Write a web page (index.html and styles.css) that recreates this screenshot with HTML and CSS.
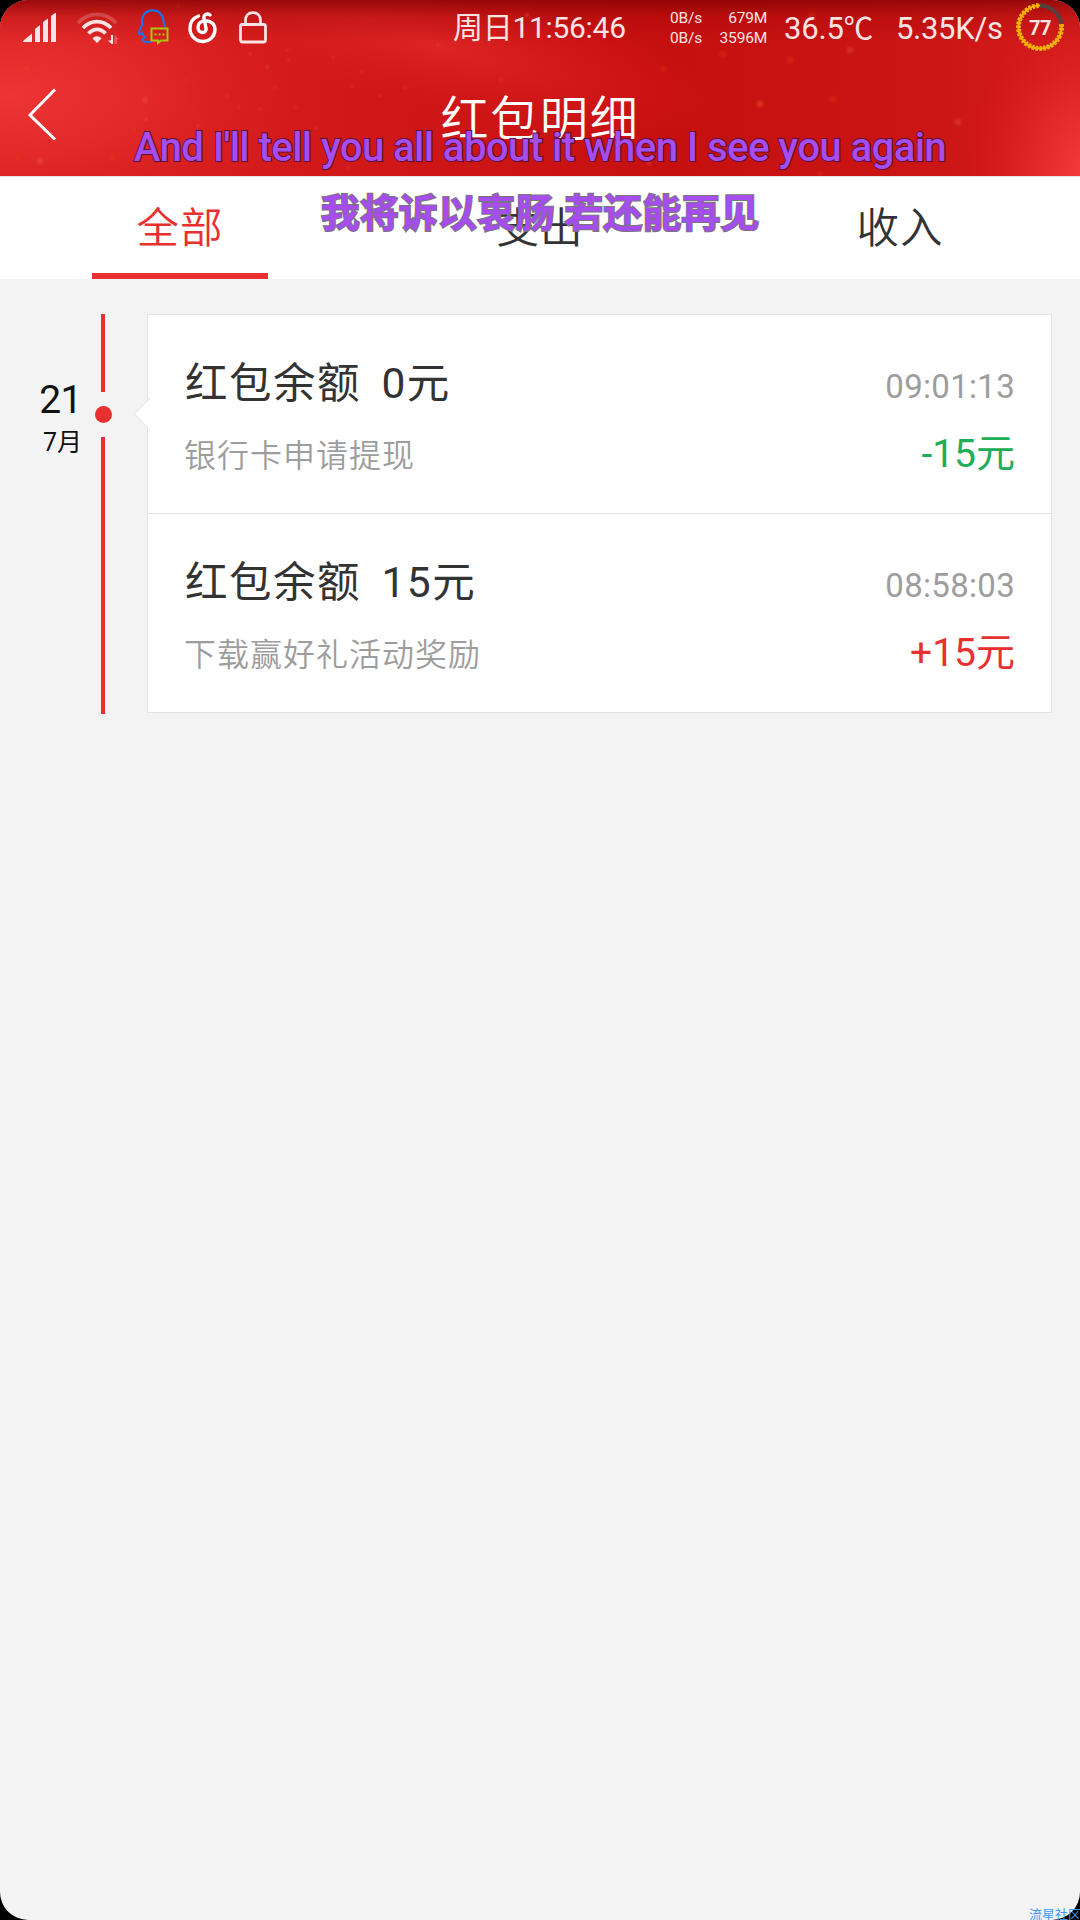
FILE: index.html
```
<!DOCTYPE html>
<html lang="zh-CN">
<head>
  <meta charset="UTF-8">
  <meta name="viewport" content="width=device-width, initial-scale=1.0">
  <title>红包明细</title>
  <link rel="stylesheet" href="styles.css">
</head>
<body>
  <div class="screen">
    <!-- Header -->
    <header class="header">
      <svg class="header-bg" width="1080" height="176" viewBox="0 0 1080 176">
        <defs>
          <radialGradient id="glow-left" gradientUnits="userSpaceOnUse" cx="0" cy="0" r="1" gradientTransform="translate(10 95) scale(330 150)">
            <stop offset="0" stop-color="#ee3535"/>
            <stop offset="0.4" stop-color="#e82e2e" stop-opacity="0.7"/>
            <stop offset="1" stop-color="#d81c1c" stop-opacity="0"/>
          </radialGradient>
          <radialGradient id="glow-mid" gradientUnits="userSpaceOnUse" cx="0" cy="0" r="1" gradientTransform="translate(440 48) rotate(12) scale(290 65)">
            <stop offset="0" stop-color="#e02828" stop-opacity="0.8"/>
            <stop offset="1" stop-color="#d81c1c" stop-opacity="0"/>
          </radialGradient>
          <radialGradient id="glow-right" gradientUnits="userSpaceOnUse" cx="0" cy="0" r="1" gradientTransform="translate(1085 170) scale(120 170)">
            <stop offset="0" stop-color="#f43c3c"/>
            <stop offset="0.4" stop-color="#e83030" stop-opacity="0.7"/>
            <stop offset="1" stop-color="#d81c1c" stop-opacity="0"/>
          </radialGradient>
          <linearGradient id="base" x1="0" y1="0" x2="1" y2="0">
            <stop offset="0" stop-color="#d82020"/>
            <stop offset="0.3" stop-color="#d21919"/>
            <stop offset="0.62" stop-color="#c60f0f"/>
            <stop offset="0.85" stop-color="#cb1414"/>
            <stop offset="1" stop-color="#d41c1c"/>
          </linearGradient>
          <linearGradient id="shade" x1="0" y1="0" x2="0" y2="1">
            <stop offset="0" stop-color="#700" stop-opacity="0.65"/>
            <stop offset="0.1" stop-color="#800" stop-opacity="0.2"/>
            <stop offset="0.24" stop-color="#800" stop-opacity="0"/>
          </linearGradient>
        </defs>
        <rect width="1080" height="176" fill="url(#base)"/>
        <rect width="1080" height="176" fill="url(#glow-left)"/>
        <rect width="1080" height="176" fill="url(#glow-mid)"/>
        <rect width="1080" height="176" fill="url(#glow-right)"/>
        <rect width="1080" height="176" fill="url(#shade)"/>
        <g class="sparks">
          <circle cx="145" cy="100" r="3"/><circle cx="146" cy="119" r="2"/><circle cx="40" cy="161" r="3.5"/>
          <circle cx="198" cy="126" r="2"/><circle cx="250" cy="54" r="2"/><circle cx="267" cy="67" r="2"/>
          <circle cx="275" cy="87" r="1.6"/><circle cx="227" cy="96" r="1.6"/><circle cx="260" cy="109" r="1.6"/>
          <circle cx="289" cy="60" r="1.6"/><circle cx="287" cy="50" r="1.6"/><circle cx="296" cy="107" r="1.5"/>
          <circle cx="527" cy="15" r="2.5"/><circle cx="438" cy="45" r="1.6"/><circle cx="333" cy="57" r="1.5"/>
          <circle cx="352" cy="86" r="1.5"/><circle cx="380" cy="96" r="1.6"/><circle cx="362" cy="72" r="1.5"/>
          <circle cx="405" cy="88" r="1.5"/><circle cx="316" cy="128" r="1.5"/><circle cx="348" cy="167" r="1.5"/>
          <circle cx="649" cy="163" r="2.5"/><circle cx="958" cy="122" r="3.5"/><circle cx="760" cy="103" r="3"/>
          <circle cx="850" cy="50" r="3.5"/>
        </g>
        <g class="embers">
          <circle cx="27" cy="68" r="2.5"/><circle cx="187" cy="80" r="2"/><circle cx="112" cy="158" r="2.5"/>
          <circle cx="112" cy="135" r="1.6"/><circle cx="18" cy="157" r="2"/><circle cx="134" cy="130" r="2"/>
          <circle cx="239" cy="107" r="2"/><circle cx="178" cy="6" r="2"/><circle cx="723" cy="54" r="4"/>
          <circle cx="663" cy="69" r="3"/><circle cx="760" cy="105" r="4"/><circle cx="790" cy="60" r="4"/>
          <circle cx="833" cy="99" r="3.5"/><circle cx="812" cy="16" r="4"/><circle cx="501" cy="80" r="2"/>
          <circle cx="820" cy="174" r="3"/>
        </g>
      </svg>

      <div class="status-bar">
        <div class="status-icons">
          <!-- Signal -->
          <svg class="icon-signal" width="34" height="30" viewBox="0 0 34 30">
            <path d="M0 29V28L9 20.5V29ZM12 29V16L17 12V29ZM20 29V9L25 5.500V29ZM28 29V3L32 0H33V29Z"/>
          </svg>
          <!-- Wifi -->
          <svg class="icon-wifi" width="43" height="33" viewBox="0 0 43 33">
            <path class="wifi-faint" d="M2 11C13-.5 29-.5 40 11"/>
            <path d="M7 16C15 7.500 27 7.500 35 16"/>
            <path d="M12.500 21.500C17.500 16 24.500 16 29.500 21.500"/>
            <path class="wifi-dot" d="M16.500 26.500C19 23.500 23 23.500 25.500 26.500L21 31Z"/>
            <path class="wifi-dot" d="M35 23H37V32H35.500L32 28.500H35Z"/>
            <path class="wifi-off" d="M38.500 32V23L43 27.500H41V32Z"/>
          </svg>
          <!-- QQ message -->
          <svg class="icon-qq" width="31" height="36" viewBox="0 0 31 36">
            <path class="qq-body" d="M13 32.500C9 34 5 33 4.500 31C4.500 29.500 6 29 7 28.500C5.500 27 4.500 25.500 4 24C3 25.500 1 26 1 24C1 21 2.500 18.500 4 16.500V13C4 5.500 8.500 1.200 14.500 1.200C20.500 1.200 25 5.500 25.500 12L27 18"/>
            <path class="qq-bubble" d="M14 19.500H29.500V31.500H23L20 34V31.500H13.500V19.500Z"/>
            <path class="qq-dots" d="M16.500 25.500H18.500M20.500 25.500H22.500M24.500 25.500H26.500"/>
          </svg>
          <!-- Music -->
          <svg class="icon-music" width="30" height="32" viewBox="0 0 30 32">
            <path d="M10.500 4C5 6 2 10.500 2 16.500C2 24 8 29.500 15 29.500C22 29.500 27 24 27 17.500C27 12 22.500 8.700 17.500 8.700C12.500 8.700 10 12 10 15.500C10 18.500 12 20.500 14.500 20.500C17 20.500 18.500 18.500 18 16L16 6.500C15.200 2.500 19 .8 22 3"/>
          </svg>
          <!-- Lock -->
          <svg class="icon-lock" width="28" height="33" viewBox="0 0 28 33">
            <path d="M6.500 13V9.500C6.500 4.500 9.500 1.700 14 1.700C18.500 1.700 21.500 4.500 21.500 9.500V13"/>
            <rect x="1.500" y="13.500" width="25" height="17.500" rx="2"/>
          </svg>
        </div>
        <span class="status-clock">周日11:56:46</span>
        <div class="status-net">
          <span>0B/s</span><span>679M</span>
          <span>0B/s</span><span>3596M</span>
        </div>
        <span class="status-temp">36.5<span class="unit">℃</span></span>
        <span class="status-speed">5.35K/s</span>
        <div class="battery">
          <svg width="48" height="48" viewBox="0 0 48 48">
            <circle class="ring-used" cx="24" cy="24" r="21.500" pathLength="100"/>
            <circle class="ring-used-core" cx="24" cy="24" r="21.500" pathLength="100"/>
            <circle class="ring-left" cx="24" cy="24" r="21.500" pathLength="100"/>
            <circle class="ring-left-core" cx="24" cy="24" r="21.500" pathLength="100"/>
          </svg>
          <span>77</span>
        </div>
      </div>

      <div class="title-bar">
        <svg class="back" width="30" height="54" viewBox="0 0 30 54">
          <path d="M27 1.500L2 27L27 51.500"/>
        </svg>
        <h1>红包明细</h1>
      </div>
    </header>

    <!-- Tabs -->
    <nav class="tabs">
      <a class="tab active"><span>全部</span></a>
      <a class="tab"><span>支出</span></a>
      <a class="tab"><span>收入</span></a>
    </nav>

    <!-- Records -->
    <main class="records">
      <div class="date">
        <span class="day">21</span>
        <span class="month">7月</span>
      </div>
      <div class="timeline">
        <div class="line line-top"></div>
        <div class="dot"></div>
        <div class="line line-bottom"></div>
      </div>
      <div class="card">
        <svg class="arrow" width="18" height="34" viewBox="0 0 18 34">
          <path d="M17 1L1.500 17L17 33"/>
        </svg>
        <div class="record">
          <div class="row row-main">
            <span class="name">红包余额&nbsp; 0元</span>
            <span class="time">09:01:13</span>
          </div>
          <div class="row row-sub">
            <span class="desc">银行卡申请提现</span>
            <span class="amount expense">-15元</span>
          </div>
        </div>
        <div class="record">
          <div class="row row-main">
            <span class="name">红包余额&nbsp; 15元</span>
            <span class="time">08:58:03</span>
          </div>
          <div class="row row-sub">
            <span class="desc">下载赢好礼活动奖励</span>
            <span class="amount income">+15元</span>
          </div>
        </div>
      </div>
    </main>

    <!-- Desktop lyrics floating over the page -->
    <div class="lyrics">
      <p class="lyric-en">And I'll tell you all about it when I see you again</p>
      <p class="lyric-zh">我将诉以衷肠 若还能再见</p>
    </div>
  </div>
  <div class="watermark">流星社区</div>
</body>
</html>
```
FILE: styles.css
```
* {
  box-sizing: border-box;
}

body {
  margin: 0;
  position: relative;
  height: 1920px;
  overflow: hidden;
  background-color: #000;
  font-family: Roboto, "Noto Sans CJK SC", sans-serif;
}

.screen {
  position: relative;
  height: 1920px;
  border-radius: 28px;
  overflow: hidden;
  background-color: #f3f3f3;
}

/* Header */
.header {
  position: relative;
  height: 176px;
  color: #fff;
}

.header-bg {
  position: absolute;
  top: 0;
  left: 0;
}

.sparks {
  fill: #ff8a7a;
  opacity: 0.2;
  filter: blur(0.8px);
}

.embers {
  fill: #ff5a1c;
  opacity: 0.17;
  filter: blur(0.8px);
}

.status-bar {
  position: relative;
  display: flex;
  align-items: center;
  height: 56px;
  padding-left: 23px;
  color: #fbe3e3;
  white-space: nowrap;
}

.status-icons {
  display: flex;
  align-items: center;
  width: 430px;
}

.icon-signal {
  fill: #fbe3e3;
}

.icon-wifi {
  margin-left: 19px;
  fill: none;
  stroke: #fbe3e3;
  stroke-width: 3.8;
}

.icon-wifi .wifi-faint {
  stroke: #fff;
  stroke-opacity: 0.2;
}

.icon-wifi .wifi-dot {
  fill: #fbe3e3;
  stroke: none;
}

.icon-wifi .wifi-off {
  fill: #fff;
  fill-opacity: 0.25;
  stroke: none;
}

.icon-qq {
  margin-left: 19px;
  margin-top: -2px;
  fill: none;
  stroke-width: 2;
}

.qq-body {
  stroke: #1177f5;
}

.qq-bubble,
.qq-dots {
  stroke: #a8c80c;
}

.icon-music {
  margin-left: 19px;
  fill: none;
  stroke: #fff;
  stroke-width: 3.4;
  stroke-linecap: round;
}

.icon-lock {
  margin-left: 21px;
  margin-top: -2px;
  fill: none;
  stroke: #fbe3e3;
  stroke-width: 2.8;
}

.status-clock {
  width: 217px;
  font-size: 30px;
  letter-spacing: -0.300px;
  line-height: 60px;
}

.status-net {
  display: grid;
  grid-template-columns: 32px 65px;
  font-size: 15.500px;
  letter-spacing: -0.200px;
  line-height: 20px;
}

.status-net span:nth-child(even) {
  text-align: right;
}

.status-temp {
  width: 112px;
  margin-left: 17px;
  font-size: 31px;
  letter-spacing: -0.200px;
  line-height: 58px;
  height: 56px;
}

.unit {
  font-family: "Noto Sans CJK SC", sans-serif;
  font-size: 29.500px;
  line-height: 1;
}

.status-speed {
  width: 120px;
  font-size: 31px;
  letter-spacing: -0.300px;
  height: 56px;
  line-height: 58px;
}

.battery {
  position: relative;
  width: 48px;
  height: 48px;
  margin-top: -2px;
}

.battery svg {
  display: block;
  fill: none;
  transform: rotate(-90deg);
}

.ring-used {
  stroke: #4d4542;
  stroke-width: 4.5;
  stroke-dasharray: 1.9 0.956;
}

.ring-used-core {
  stroke: #4d4542;
  stroke-width: 2;
  stroke-dasharray: 23 77;
}

.ring-left {
  stroke: #f8b000;
  stroke-width: 5;
  stroke-dasharray: 1.9 0.956 1.9 0.956 1.9 0.956 1.9 0.956 1.9 0.956 1.9 0.956 1.9 0.956 1.9 0.956 1.9 0.956 1.9 0.956 1.9 0.956 1.9 0.956 1.9 0.956 1.9 0.956 1.9 0.956 1.9 0.956 1.9 0.956 1.9 0.956 1.9 0.956 1.9 0.956 1.9 0.956 1.9 0.956 1.9 0.956 1.9 0.956 1.9 0.956 1.9 0.956 1.9 23.844;
  stroke-dashoffset: -22.848;
}

.ring-left-core {
  stroke: #f8b000;
  stroke-width: 2.2;
  stroke-dasharray: 77 23;
  stroke-dashoffset: -23;
}

.battery span {
  position: absolute;
  top: 0;
  left: 0;
  width: 48px;
  font-size: 20px;
  font-weight: 700;
  letter-spacing: -0.500px;
  line-height: 50px;
  text-align: center;
}

.title-bar {
  position: relative;
  display: flex;
  align-items: center;
  justify-content: center;
  height: 120px;
}

.back {
  position: absolute;
  left: 28px;
  top: 32px;
  fill: none;
  stroke: #fff;
  stroke-width: 3;
}

.title-bar h1 {
  margin: 0;
  padding-top: 7px;
  font-size: 48px;
  font-weight: 350;
  line-height: 120px;
  letter-spacing: 1.700px;
}

/* Tabs */
.tabs {
  display: flex;
  height: 103px;
  border-top: 1px solid #e5e5e5;
  background-color: #fff;
}

.tab {
  display: flex;
  flex: 1;
  justify-content: center;
  color: #333;
  font-size: 42.500px;
  font-weight: 350;
  letter-spacing: 1px;
}

.tab span {
  width: 176px;
  height: 102px;
  padding-top: 2px;
  line-height: 100px;
  text-align: center;
}

.tab.active span {
  color: #e83030;
  border-bottom: 6px solid #e83030;
}

/* Records */
.records {
  display: flex;
  align-items: flex-start;
  padding: 35px 28px 0 0;
}

.date {
  display: flex;
  flex-direction: column;
  align-items: flex-end;
  width: 83px;
  padding-top: 62px;
  color: #111;
}

.day {
  margin-right: 1px;
  font-size: 39px;
  line-height: 48px;
  letter-spacing: -0.500px;
}

.month {
  margin-right: 1px;
  font-size: 25px;
  line-height: 38px;
}

.timeline {
  display: flex;
  flex-direction: column;
  align-items: center;
  width: 41px;
}

.line {
  width: 4px;
  margin-right: 1px;
  background-color: #e83030;
}

.line-top {
  height: 78px;
}

.line-bottom {
  height: 277px;
}

.dot {
  width: 17px;
  height: 17px;
  margin: 14px 0;
  border-radius: 50%;
  background-color: #e83030;
}

.card {
  position: relative;
  flex: 1;
  margin-left: 23px;
  border: 1px solid #e3e3e3;
  background-color: #fff;
}

.arrow {
  position: absolute;
  left: -15px;
  top: 82px;
  fill: #fff;
  stroke: #ececec;
  stroke-width: 1.2;
}

.record {
  height: 198px;
  padding: 35px 36px 0;
}

.record + .record {
  height: 199px;
  border-top: 1px solid #e3e3e3;
}

.row {
  display: flex;
  justify-content: space-between;
}

.row-main {
  height: 68px;
  line-height: 68px;
}

.row-sub {
  height: 70px;
  line-height: 70px;
}

.name {
  margin-left: 1px;
  color: #333;
  font-size: 42.500px;
  letter-spacing: 1.500px;
  word-spacing: -1.800px;
}

.time {
  padding-top: 3px;
  color: #9d9d9d;
  font-size: 33px;
  letter-spacing: 0.300px;
}

.desc {
  padding-top: 3px;
  color: #9d9d9d;
  font-size: 32px;
  font-weight: 350;
  letter-spacing: 1px;
}

.amount {
  padding-top: 1px;
  font-size: 39px;
}

.expense {
  color: #20ad57;
}

.income {
  color: #e83030;
}

/* Floating lyrics */
.lyrics {
  position: absolute;
  top: 120px;
  left: 0;
  width: 1080px;
  color: #a64df0;
  text-align: center;
  white-space: nowrap;
  paint-order: stroke fill;
}

.lyrics p {
  margin: 0;
}

.lyrics .lyric-en {
  font-size: 40px;
  font-weight: 500;
  letter-spacing: -0.520px;
  line-height: 55px;
  -webkit-text-stroke: 2px #5b1030;
}

.lyrics .lyric-zh {
  margin-top: 9px;
  font-size: 39px;
  font-weight: 700;
  line-height: 60px;
  -webkit-text-stroke: 2px #777;
}

.watermark {
  position: absolute;
  top: 1906px;
  left: 1029px;
  color: #3a9df5;
  font-size: 13px;
  line-height: 18px;
  white-space: nowrap;
}
```
